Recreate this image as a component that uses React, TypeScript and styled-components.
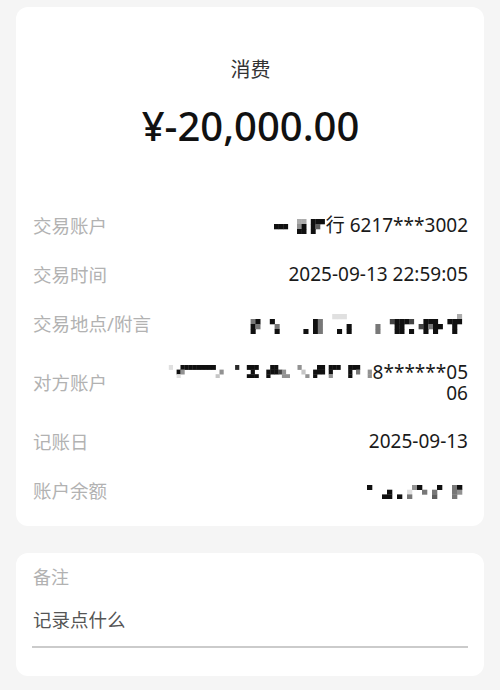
import styled, { createGlobalStyle } from "styled-components";

const GlobalStyle = createGlobalStyle`
  html, body {
    margin: 0;
    background: #f5f5f5;
  }
  body {
    font-family: "Noto Sans", "Noto Sans CJK SC", sans-serif;
    -webkit-font-smoothing: antialiased;
  }
`;

// mosaic blocks: [col, row, shade 1..9]
type Cell = [number, number, number];

const shade = (s: number) => {
  const v = Math.max(0, Math.round(250 - s * 26));
  return `rgb(${v},${v},${v})`;
};

const bankMosaic: Cell[] = [
  [5, 0, 3], [6, 0, 3], [8, 0, 9], [9, 0, 9], [10, 0, 9],
  [0, 1, 9], [1, 1, 9], [2, 1, 9], [5, 1, 4], [6, 1, 9], [8, 1, 9], [9, 1, 6],
  [5, 2, 9], [6, 2, 9], [8, 2, 9],
];

const placeMosaic: Cell[] = [
  [19, 0, 1], [20, 0, 1], [21, 0, 1], [45, 0, 3],
  [2, 1, 5], [3, 1, 9], [6, 1, 9], [15, 1, 9], [16, 1, 5], [31, 1, 7], [32, 1, 9], [33, 1, 9],
  [34, 1, 9], [35, 1, 7], [38, 1, 9], [39, 1, 9], [40, 1, 9], [43, 1, 9], [44, 1, 9], [45, 1, 9],
  [2, 2, 9], [3, 2, 5], [7, 2, 5], [15, 2, 9], [16, 2, 5], [22, 2, 9], [28, 2, 5], [32, 2, 9],
  [33, 2, 9], [37, 2, 7], [38, 2, 9], [39, 2, 5], [40, 2, 9], [41, 2, 9], [44, 2, 9],
  [2, 3, 9], [7, 3, 9], [13, 3, 9], [15, 3, 9], [16, 3, 5], [20, 3, 9], [22, 3, 9], [28, 3, 5],
  [32, 3, 9], [33, 3, 9], [35, 3, 9], [38, 3, 9], [40, 3, 9], [44, 3, 9],
];

const payeeMosaic: Cell[] = [
  [2, 0, 1], [5, 0, 9], [6, 0, 9], [7, 0, 9], [8, 0, 9], [9, 0, 9], [10, 0, 9], [11, 0, 9],
  [12, 0, 9], [13, 0, 9], [19, 0, 8], [22, 0, 9], [23, 0, 9], [24, 0, 9], [28, 0, 9],
  [29, 0, 9], [35, 0, 4], [40, 0, 9], [41, 0, 9], [43, 0, 9], [44, 0, 9], [45, 0, 9],
  [48, 0, 9], [49, 0, 9], [50, 0, 9],
  [4, 1, 9], [5, 1, 4], [15, 1, 4], [23, 1, 9], [27, 1, 9], [28, 1, 9], [29, 1, 9], [30, 1, 7],
  [31, 1, 4], [36, 1, 2], [39, 1, 9], [40, 1, 9], [41, 1, 9], [43, 1, 9], [48, 1, 9], [50, 1, 5], [53, 1, 4],
  [4, 2, 1], [14, 2, 2], [22, 2, 9], [23, 2, 9], [24, 2, 9], [27, 2, 9], [31, 2, 4], [32, 2, 4],
  [37, 2, 4], [39, 2, 9], [43, 2, 4], [48, 2, 9], [53, 2, 4],
];

const balanceMosaic: Cell[] = [
  [0, 0, 9], [9, 0, 4], [10, 0, 9], [14, 0, 9], [17, 0, 5], [18, 0, 9],
  [4, 1, 9], [8, 1, 1], [11, 1, 5], [13, 1, 5], [17, 1, 5], [18, 1, 4],
  [3, 2, 9], [4, 2, 9], [6, 2, 9], [8, 2, 5], [13, 2, 6], [17, 2, 5],
];

const MosaicSvg = styled.svg<{ $shift: number }>`
  display: inline-block;
  vertical-align: middle;
  position: relative;
  top: ${(p) => p.$shift}px;
  margin-right: 1px;
`;

function Mosaic({
  cells,
  cols,
  rows,
  w,
  h,
  shift = 0,
}: {
  cells: Cell[];
  cols: number;
  rows: number;
  w: number;
  h: number;
  shift?: number;
}) {
  return (
    <MosaicSvg width={cols * w} height={rows * h} $shift={shift} aria-hidden>
      {cells.map(([c, r, s], i) => (
        <rect key={i} x={c * w} y={r * h} width={w + 0.3} height={h + 0.3} fill={shade(s)} />
      ))}
    </MosaicSvg>
  );
}

const Page = styled.div`
  display: flex;
  flex-direction: column;
  gap: 27px;
  padding: 7px 16px 13px;
`;

const Card = styled.section`
  background: #fff;
  border-radius: 12px;
`;

const Summary = styled(Card)`
  padding: 49px 16px 11px 17px;
`;

const Kind = styled.div`
  text-align: center;
  font-size: 20px;
  line-height: 28px;
  color: #333;
`;

const Amount = styled.div`
  text-align: center;
  font-size: 40px;
  font-weight: 500;
  line-height: 52px;
  color: #111;
  margin: 16px 0 49px;
`;

const DetailRow = styled.div`
  display: flex;
  justify-content: space-between;
  align-items: center;
  gap: 16px;
  padding: 13.5px 0;
`;

const Label = styled.span`
  flex-shrink: 0;
  font-size: 18.5px;
  line-height: 22px;
  color: #b2b2b2;
`;

const Value = styled.span`
  text-align: right;
  font-size: 19px;
  line-height: 21px;
  color: #1a1a1a;
`;

const NoteCard = styled(Card)`
  padding: 12px 16px 28px 16px;
`;

const NoteLabel = styled.div`
  font-size: 18px;
  line-height: 24px;
  color: #b2b2b2;
  padding-left: 1px;
`;

const NoteInput = styled.input`
  display: block;
  box-sizing: border-box;
  width: 100%;
  margin-top: 18px;
  padding: 0 0 15px 1px;
  height: 41px;
  border: none;
  border-bottom: 2px solid #cbcbcb;
  outline: none;
  background: transparent;
  font-family: inherit;
  font-size: 18.5px;
  line-height: 24px;
  color: #333;

  &::placeholder {
    color: #555;
  }
`;

export default function App() {
  return (
    <>
      <GlobalStyle />
      <Page>
        <Summary>
          <Kind>消费</Kind>
          <Amount>¥-20,000.00</Amount>
          <DetailRow>
            <Label>交易账户</Label>
            <Value>
              <Mosaic cells={bankMosaic} cols={11} rows={3} w={4.6} h={5} />
              行 6217***3002
            </Value>
          </DetailRow>
          <DetailRow>
            <Label>交易时间</Label>
            <Value>2025-09-13 22:59:05</Value>
          </DetailRow>
          <DetailRow>
            <Label>交易地点/附言</Label>
            <Value>
              <Mosaic cells={placeMosaic} cols={47} rows={4} w={4.8} h={5} />
            </Value>
          </DetailRow>
          <DetailRow>
            <Label>对方账户</Label>
            <Value>
              <Mosaic cells={payeeMosaic} cols={54} rows={3} w={3.9} h={4.6} shift={-2} />
              8******05
              <br />
              06
            </Value>
          </DetailRow>
          <DetailRow>
            <Label>记账日</Label>
            <Value>2025-09-13</Value>
          </DetailRow>
          <DetailRow>
            <Label>账户余额</Label>
            <Value>
              <Mosaic cells={balanceMosaic} cols={20} rows={3} w={5} h={4.7} />
            </Value>
          </DetailRow>
        </Summary>
        <NoteCard>
          <NoteLabel>备注</NoteLabel>
          <NoteInput placeholder="记录点什么" />
        </NoteCard>
      </Page>
    </>
  );
}
